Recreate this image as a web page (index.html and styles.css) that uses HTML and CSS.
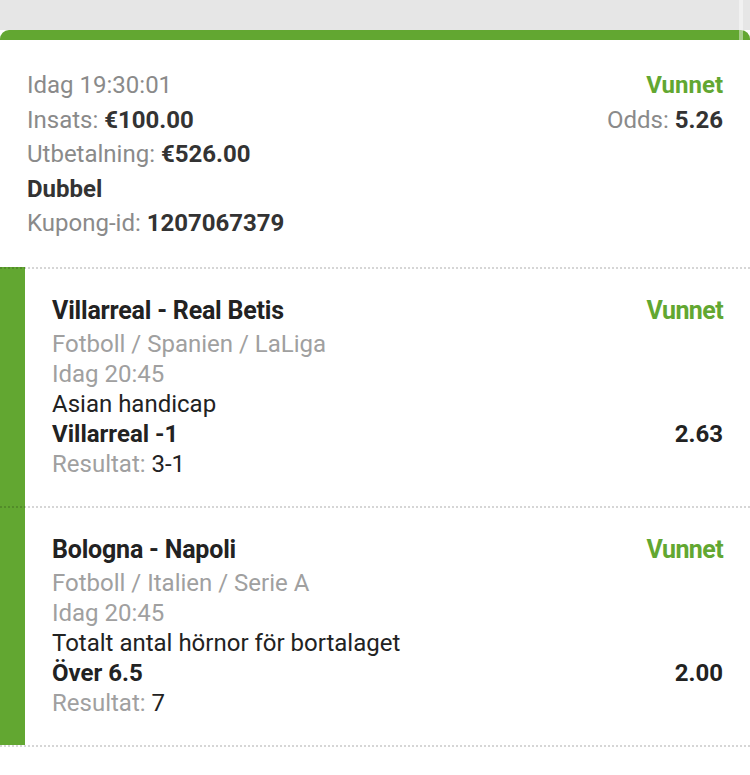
FILE: index.html
```html
<!DOCTYPE html>
<html lang="sv">
<head>
    <meta charset="UTF-8">
    <meta name="viewport" content="width=device-width, initial-scale=1.0">
    <title>Kupong 1207067379</title>
    <link rel="stylesheet" href="styles.css">
</head>
<body>
    <div class="top-strip"></div>
    <div class="scroll-hint"></div>
    <main class="coupon">
        <div class="coupon-head"></div>
        <section class="summary">
            <div class="summary-left">
                <div class="muted">Idag 19:30:01</div>
                <div class="muted">Insats: <b class="value">€100.00</b></div>
                <div class="muted">Utbetalning: <b class="value">€526.00</b></div>
                <div class="value strong">Dubbel</div>
                <div class="muted">Kupong-id: <b class="value">1207067379</b></div>
            </div>
            <div class="summary-right">
                <div class="status">Vunnet</div>
                <div class="muted">Odds: <b class="value">5.26</b></div>
            </div>
        </section>

        <section class="leg">
            <div class="leg-bar"></div>
            <div class="leg-body">
                <div class="leg-row">
                    <span class="leg-title">Villarreal - Real Betis</span>
                    <span class="leg-status">Vunnet</span>
                </div>
                <div class="leg-line grey">Fotboll / Spanien / LaLiga</div>
                <div class="leg-line grey">Idag 20:45</div>
                <div class="leg-line">Asian handicap</div>
                <div class="leg-row leg-line">
                    <b>Villarreal -1</b>
                    <b>2.63</b>
                </div>
                <div class="leg-line"><span class="grey">Resultat:</span> 3-1</div>
            </div>
        </section>

        <section class="leg">
            <div class="leg-bar"></div>
            <div class="leg-body">
                <div class="leg-row">
                    <span class="leg-title">Bologna - Napoli</span>
                    <span class="leg-status">Vunnet</span>
                </div>
                <div class="leg-line grey">Fotboll / Italien / Serie A</div>
                <div class="leg-line grey">Idag 20:45</div>
                <div class="leg-line">Totalt antal hörnor för bortalaget</div>
                <div class="leg-row leg-line">
                    <b>Över 6.5</b>
                    <b>2.00</b>
                </div>
                <div class="leg-line"><span class="grey">Resultat:</span> 7</div>
            </div>
        </section>
        <div class="leg-end"></div>
    </main>
</body>
</html>
```

FILE: styles.css
```css
:root {
    --green: #62a731;
    --strip: #e6e6e6;
    --muted: #8a8a8a;
    --grey: #a0a0a0;
    --dark: #333333;
    --ink: #222222;
    --dots: repeating-linear-gradient(to right, rgba(0, 0, 0, 0.16) 0 2px, transparent 2px 4px);
}

body {
    margin: 0;
    background-color: #ffffff;
    font-family: 'Roboto', 'Liberation Sans', sans-serif;
    font-size: 24px;
    color: var(--ink);
    position: relative;
}

.top-strip {
    height: 30px;
    background-color: var(--strip);
}

.scroll-hint {
    position: absolute;
    top: 0;
    left: 739px;
    width: 4px;
    height: 40px;
    background-color: rgba(255, 255, 255, 0.45);
}

.coupon-head {
    height: 10px;
    background-color: var(--green);
    border-radius: 9px 9px 0 0;
}

.summary {
    display: flex;
    justify-content: space-between;
    padding: 28px 27px 26px;
    line-height: 34.5px;
}

.summary-right {
    text-align: right;
}

.muted {
    color: var(--muted);
}

.value {
    color: var(--dark);
    font-weight: bold;
}

.status {
    color: var(--green);
    font-weight: bold;
}

.leg {
    position: relative;
    display: flex;
}

.leg::before,
.leg-end {
    content: "";
    position: absolute;
    top: 0;
    left: 0;
    right: 0;
    height: 2px;
    background: var(--dots);
}

.leg-end {
    position: static;
}

.leg-bar {
    width: 25px;
    background-color: var(--green);
}

.leg-body {
    flex: 1;
    padding: 25px 27px 27px 27px;
    line-height: 30px;
}

.leg-row {
    display: flex;
    justify-content: space-between;
}

.leg-title,
.leg-status {
    font-size: 25px;
    font-weight: bold;
    letter-spacing: -0.2px;
    line-height: 37px;
}

.leg-status {
    color: var(--green);
    letter-spacing: -0.6px;
}

.leg-line b {
    font-weight: bold;
}

.grey {
    color: var(--grey);
}
```
